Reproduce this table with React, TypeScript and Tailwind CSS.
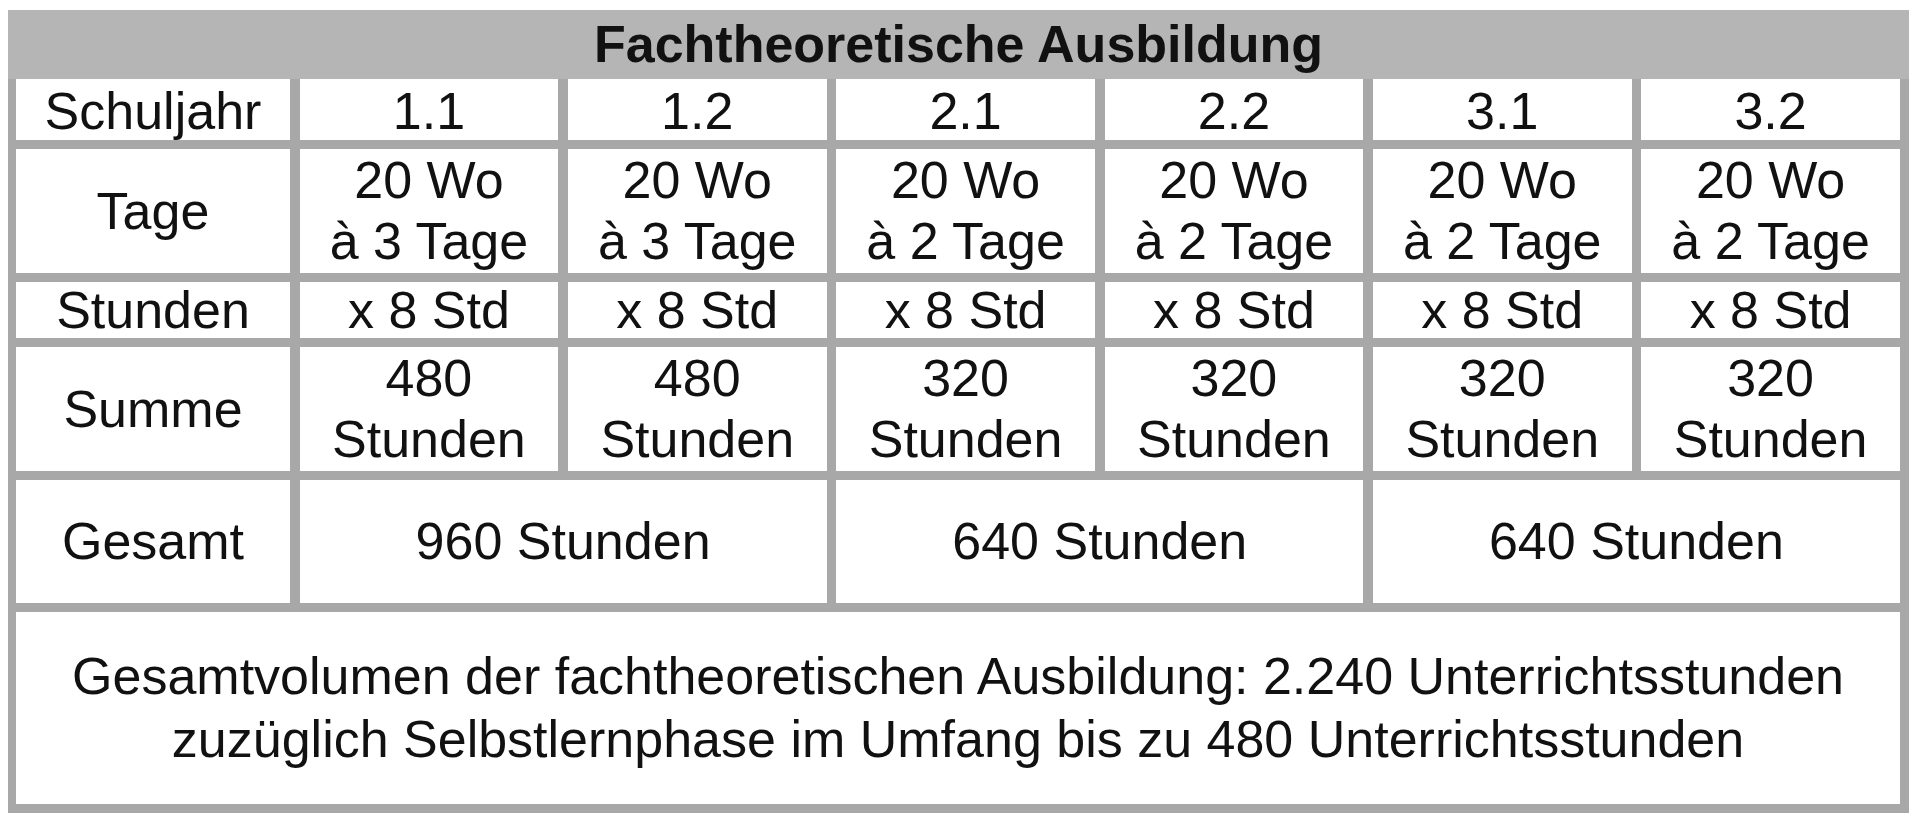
import React from "react";

const semesters = ["1.1", "1.2", "2.1", "2.2", "3.1", "3.2"];
const tage = ["3", "3", "2", "2", "2", "2"];
const summe = ["480", "480", "320", "320", "320", "320"];

/* Zelle mit zentriertem Text */
const Cell: React.FC<{ className?: string; children: React.ReactNode }> = ({
  className = "",
  children,
}) => (
  <div className={`bg-white flex flex-col items-center justify-center text-center ${className}`}>
    {children}
  </div>
);

const App: React.FC = () => {
  return (
    <div
      className="min-h-screen bg-white pl-[8px] pt-[10px] text-[52px] leading-[61px] text-[#111]"
      style={{ fontFamily: '"Liberation Sans", Arial, sans-serif' }}
    >
      <div className="w-[1901px] bg-[#a8a8a8] flex flex-col">
        {/* ------------- Kopfzeile ------------- */}
        <div className="h-[69px] bg-[#b4b5b4] flex items-center justify-center font-bold">
          Fachtheoretische Ausbildung
        </div>

        {/* ------------- Tabelle ------------- */}
        <div className="grid grid-cols-[274px_repeat(6,minmax(0,1fr))] grid-rows-[61px_124px_56px_124px_123px_192px] gap-x-[9.5px] gap-y-[9px] pl-[8px] pr-[9px] pb-[9px]">
          <Cell className="pt-[4px]">Schuljahr</Cell>
          {semesters.map((s) => (
            <Cell key={s} className="pt-[4px]">
              {s}
            </Cell>
          ))}

          <Cell>Tage</Cell>
          {tage.map((t, i) => (
            <Cell key={i}>
              <span>20 Wo</span>
              <span>à {t} Tage</span>
            </Cell>
          ))}

          <Cell>Stunden</Cell>
          {semesters.map((s) => (
            <Cell key={s}>x 8 Std</Cell>
          ))}

          <Cell>Summe</Cell>
          {summe.map((v, i) => (
            <Cell key={i}>
              <span>{v}</span>
              <span>Stunden</span>
            </Cell>
          ))}

          <Cell>Gesamt</Cell>
          <Cell className="col-span-2">960 Stunden</Cell>
          <Cell className="col-span-2">640 Stunden</Cell>
          <Cell className="col-span-2">640 Stunden</Cell>

          <Cell className="col-span-7 leading-[63px]">
            <span>Gesamtvolumen der fachtheoretischen Ausbildung: 2.240 Unterrichtsstunden</span>
            <span>zuzüglich Selbstlernphase im Umfang bis zu 480 Unterrichtsstunden</span>
          </Cell>
        </div>
      </div>
    </div>
  );
};

export default App;
